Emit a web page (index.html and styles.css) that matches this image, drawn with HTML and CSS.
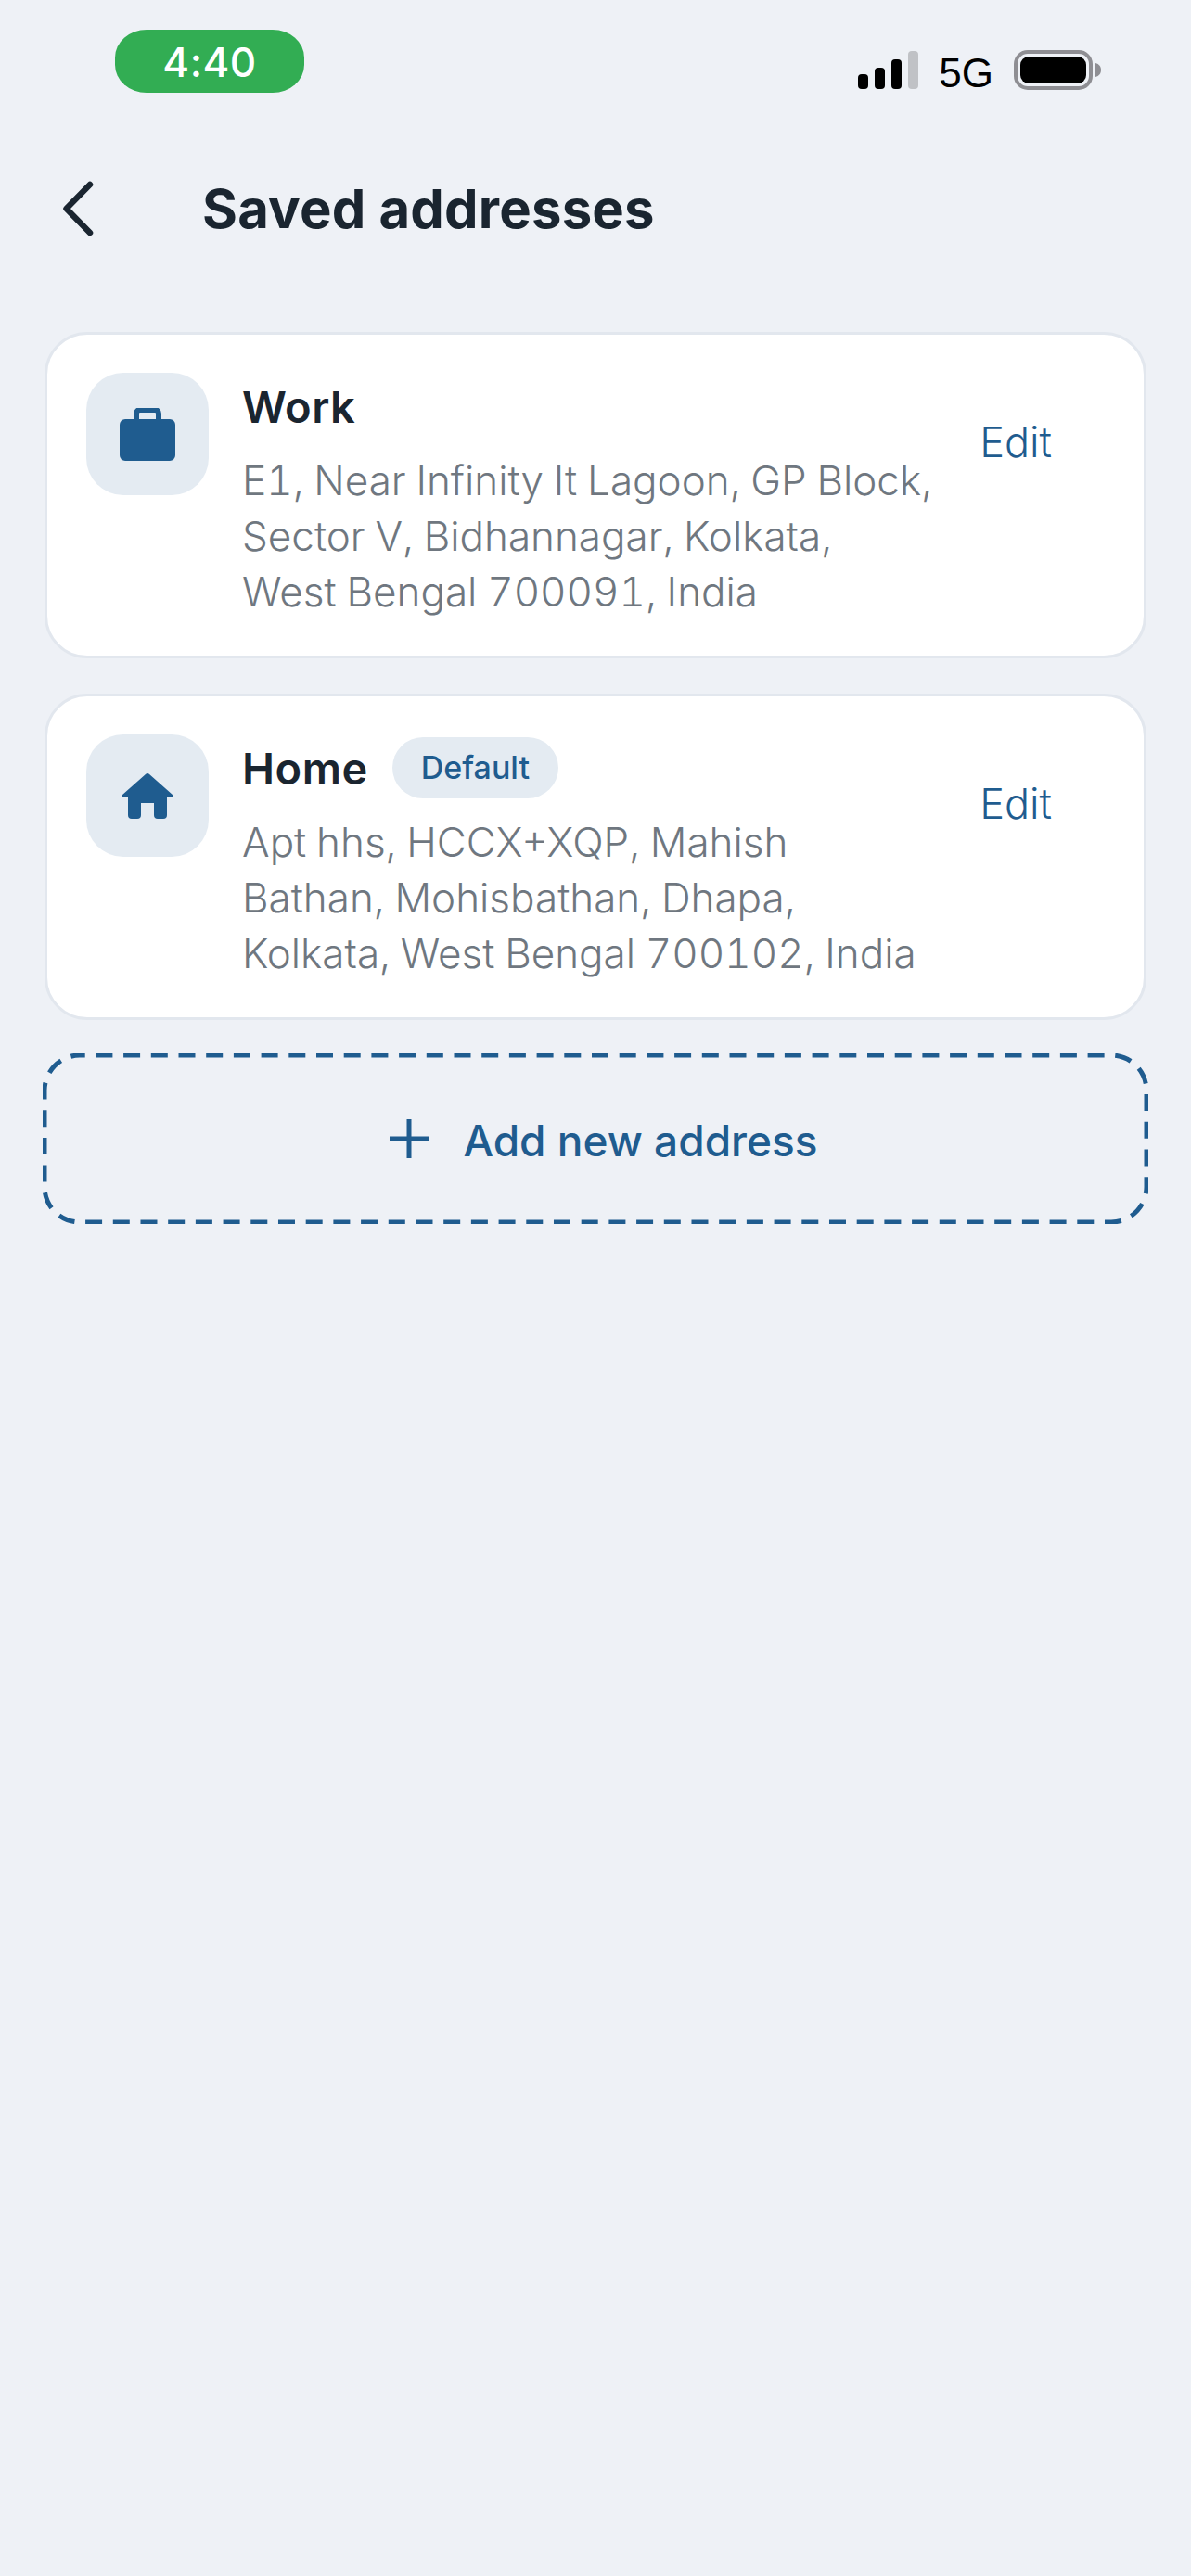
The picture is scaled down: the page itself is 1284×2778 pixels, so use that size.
FILE: index.html
```html
<!DOCTYPE html>
<html lang="en">
<head>
    <meta charset="utf-8">
    <meta name="viewport" content="width=device-width, initial-scale=1">
    <title>Saved addresses</title>
    <link rel="stylesheet" href="styles.css">
</head>
<body>
    <div class="status-bar">
        <span class="time">4:40</span>
        <div class="status-right">
            <svg class="signal" width="65" height="41" viewBox="0 0 65 41">
                <rect x="0" y="25" width="11" height="16" rx="4" fill="#000"/>
                <rect x="18" y="18" width="11" height="23" rx="4" fill="#000"/>
                <rect x="36" y="9" width="11" height="32" rx="4" fill="#000"/>
                <rect x="54" y="0" width="11" height="41" rx="4" fill="#c0c2c6"/>
            </svg>
            <span class="network">5G</span>
            <svg class="battery" width="94" height="43" viewBox="0 0 94 43">
                <rect x="2" y="2" width="81" height="39" rx="13" fill="none" stroke="#8e8e93" stroke-width="4"/>
                <rect x="7" y="7" width="71" height="29" rx="9" fill="#000"/>
                <path d="M88 14c4 1 6 4 6 7.500s-2 6.500-6 7.500z" fill="#8e8e93"/>
            </svg>
        </div>
    </div>

    <div class="header">
        <svg class="back" width="36" height="60" viewBox="0 0 36 60">
            <path d="M31 4 5.500 30 31 56" fill="none" stroke="#1a2530" stroke-width="6.500" stroke-linecap="round" stroke-linejoin="round"/>
        </svg>
        <h1>Saved addresses</h1>
    </div>

    <div class="list">
        <div class="card">
            <div class="icon-box">
                <svg width="60" height="57" viewBox="0 0 60 57">
                    <path d="M18 14V6a4 4 0 0 1 4-4h16a4 4 0 0 1 4 4v8" fill="none" stroke="#1f5c8f" stroke-width="6"/>
                    <rect x="0" y="12" width="60" height="45" rx="6" fill="#1f5c8f"/>
                </svg>
            </div>
            <div class="info">
                <div class="name-row">
                    <span class="name">Work</span>
                </div>
                <p class="address">E1, Near Infinity It Lagoon, GP Block,<br>Sector V, Bidhannagar, Kolkata,<br>West Bengal 700091, India</p>
            </div>
            <a class="edit">Edit</a>
        </div>

        <div class="card">
            <div class="icon-box">
                <svg width="56" height="49" viewBox="0 0 56 49">
                    <path d="M28 0c.7 0 1.300.3 1.800.8L55.500 23.500c.9.900.4 2-.8 2H49V45a4 4 0 0 1-4 4h-6a4 4 0 0 1-4-4V32H21v13a4 4 0 0 1-4 4h-6a4 4 0 0 1-4-4V25.500H1.300c-1.200 0-1.700-1.100-.8-2L26.200.8C26.700.3 27.300 0 28 0z" fill="#1f5c8f"/>
                </svg>
            </div>
            <div class="info">
                <div class="name-row">
                    <span class="name">Home</span>
                    <span class="badge">Default</span>
                </div>
                <p class="address">Apt hhs, HCCX+XQP, Mahish<br>Bathan, Mohisbathan, Dhapa,<br>Kolkata, West Bengal 700102, India</p>
            </div>
            <a class="edit">Edit</a>
        </div>

        <div class="add-btn">
            <svg class="dashes" width="1192" height="184" viewBox="0 0 1192 184">
                <rect x="2" y="2" width="1188" height="180" rx="38" fill="none" stroke="#1f5c8f" stroke-width="5" stroke-dasharray="18 11.700" stroke-dashoffset="12.300"/>
            </svg>
            <svg width="44" height="44" viewBox="0 0 44 44">
                <path d="M22 1v42M1 22h42" fill="none" stroke="#1f5c8f" stroke-width="5"/>
            </svg>
            <span class="add-label">Add new address</span>
        </div>
    </div>
</body>
</html>
```

FILE: styles.css
```css
body {
    margin: 0;
    height: 2778px;
    background-color: #eef1f6;
    font-family: Inter, "Open Sans", sans-serif;
    color: #1a2530;
}
.status-bar {
    display: flex;
    justify-content: space-between;
    padding: 32px 97px 0 124px;
    height: 68px;
}
.time {
    width: 204px;
    height: 68px;
    line-height: 70px;
    text-align: center;
    background-color: #32ad53;
    border-radius: 34px / 30px;
    color: white;
    font-size: 44px;
    font-weight: 500;
    letter-spacing: 0.5px;
}
.status-right {
    display: flex;
    align-items: flex-start;
    padding-top: 22px;
}
.signal {
    margin-top: 1px;
}
.network {
    margin: 4px 22px 0 22px;
    font-family: "Liberation Sans", Arial, sans-serif;
    font-size: 44px;
    line-height: 42px;
    color: #000;
}
.header {
    display: flex;
    align-items: center;
    padding: 95px 0 0 66px;
    height: 60px;
}
.back {
    flex: none;
}
h1 {
    margin: 0 0 0 116px;
    font-size: 58px;
    font-weight: 700;
    letter-spacing: 0.2px;
}
.list {
    display: flex;
    flex-direction: column;
    padding: 103px 46px 0 46px;
}
.card {
    display: flex;
    align-items: flex-start;
    box-sizing: border-box;
    width: 1188px;
    height: 352px;
    margin: 0 2px 38px 2px;
    padding: 41px 99px 0 42px;
    background: white;
    border: 3px solid #e2e7ee;
    border-radius: 46px;
}
.card:nth-child(2) {
    margin-bottom: 36px;
}
.icon-box {
    display: flex;
    justify-content: center;
    align-items: center;
    flex: none;
    width: 132px;
    height: 132px;
    background-color: #e4ebf2;
    border-radius: 40px;
}
.info {
    flex: 1;
    margin-left: 36px;
    padding-top: 1px;
}
.name-row {
    display: flex;
    align-items: center;
    height: 70px;
}
.name {
    font-size: 47px;
    font-weight: 600;
    letter-spacing: 0.5px;
}
.badge {
    margin-left: 26px;
    padding: 0 31px;
    height: 66px;
    line-height: 66px;
    background-color: #e4ebf2;
    border-radius: 33px;
    color: #1f5c8f;
    font-size: 34px;
    font-weight: 500;
}
.address {
    margin: 15px 0 0 0;
    font-size: 44px;
    font-weight: 300;
    font-variant-numeric: tabular-nums;
    word-spacing: -1px;
    line-height: 60px;
    color: #6f7780;
    white-space: nowrap;
}
.edit {
    flex: none;
    margin-top: 49px;
    font-size: 45px;
    font-weight: 300;
    line-height: 52px;
    color: #1f5c8f;
}
.add-btn {
    position: relative;
    display: flex;
    justify-content: center;
    align-items: center;
    gap: 36px;
    box-sizing: border-box;
    width: 1192px;
    height: 184px;
    padding-left: 17px;
    color: #1f5c8f;
}
.add-label {
    padding-top: 3px;
    font-size: 46px;
    font-weight: 450;
}
.dashes {
    position: absolute;
    top: 0;
    left: 0;
}
```
